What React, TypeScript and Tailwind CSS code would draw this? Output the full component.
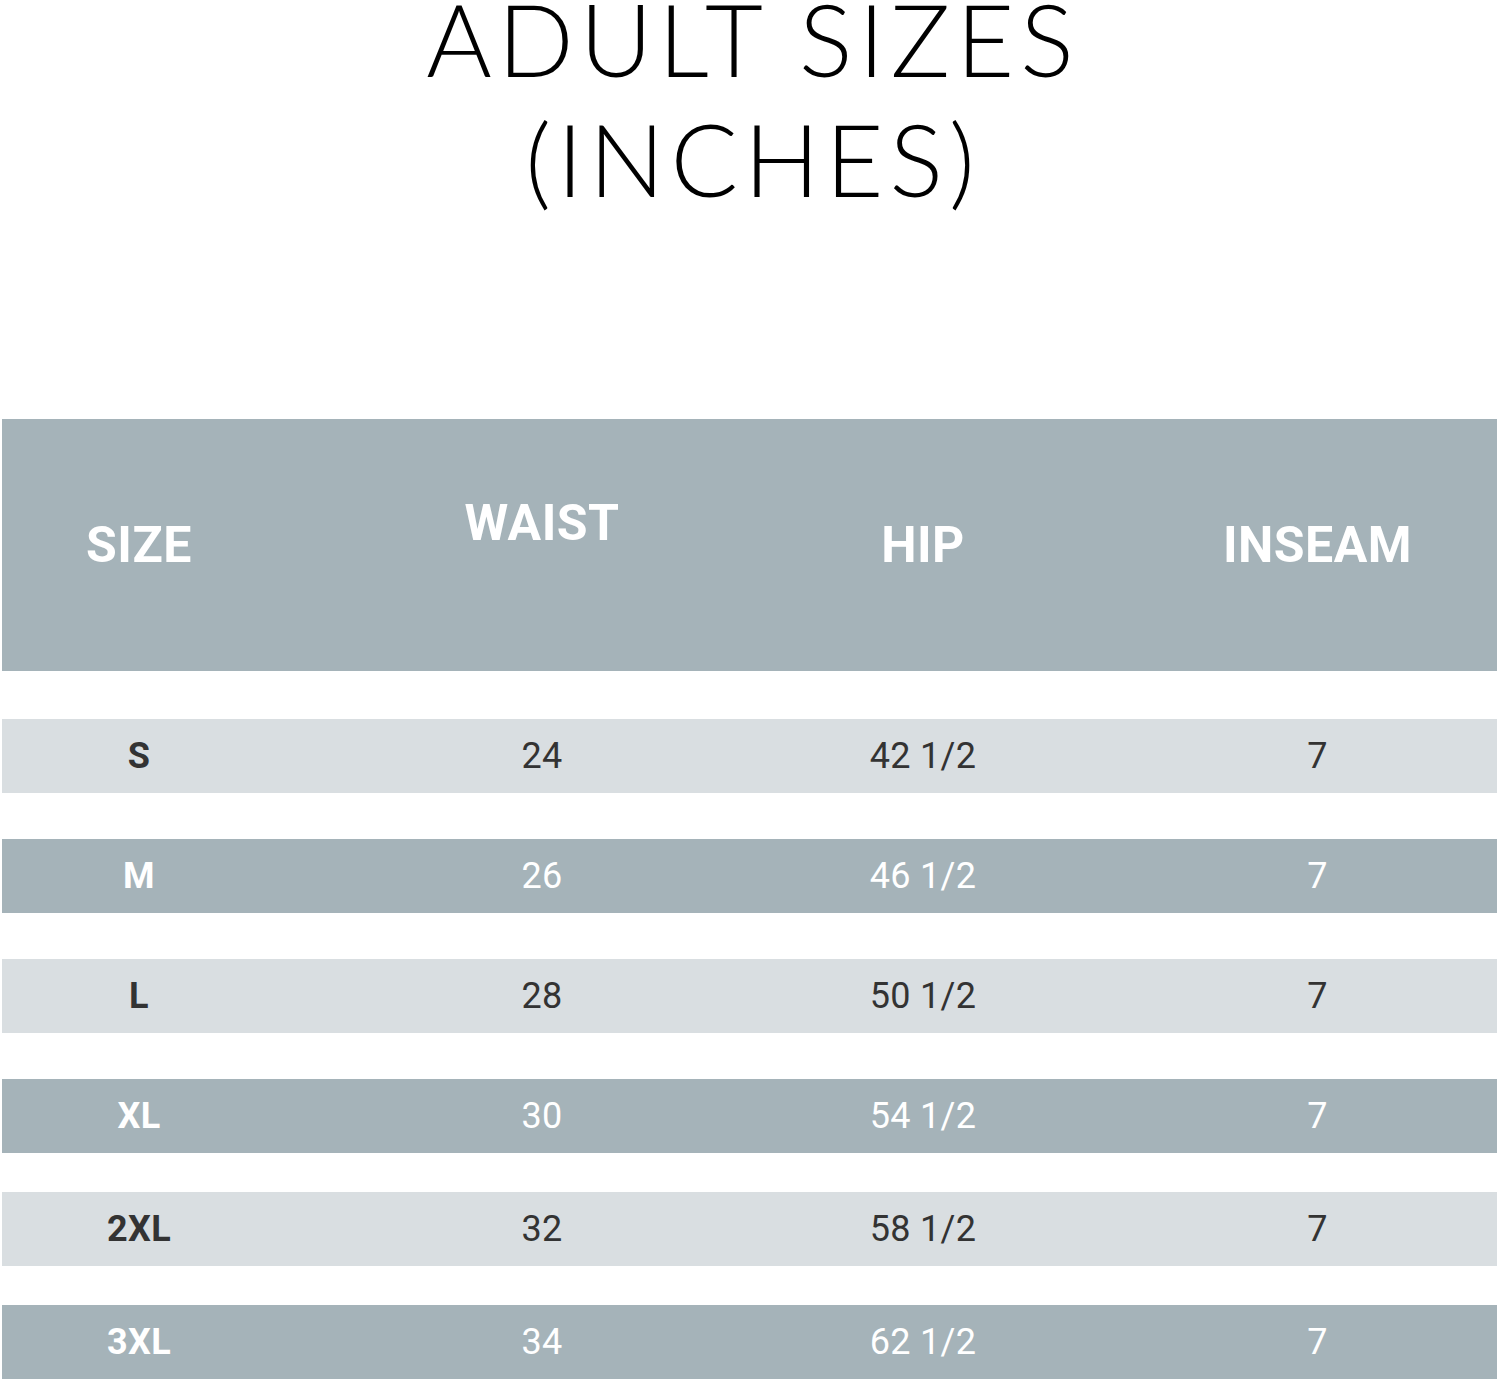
const rows = [
  { size: "S", waist: "24", hip: "42 1/2", inseam: "7", dark: false, gap: "mt-[48px]" },
  { size: "M", waist: "26", hip: "46 1/2", inseam: "7", dark: true, gap: "mt-[46px]" },
  { size: "L", waist: "28", hip: "50 1/2", inseam: "7", dark: false, gap: "mt-[46px]" },
  { size: "XL", waist: "30", hip: "54 1/2", inseam: "7", dark: true, gap: "mt-[46px]" },
  { size: "2XL", waist: "32", hip: "58 1/2", inseam: "7", dark: false, gap: "mt-[39px]" },
  { size: "3XL", waist: "34", hip: "62 1/2", inseam: "7", dark: true, gap: "mt-[39px]" },
];

export default function App() {
  return (
    <main className="w-[1500px] h-[1382px] overflow-hidden bg-white font-['Roboto',sans-serif]">
      <h1 className="-mt-[22px] pl-[6px] text-center font-['Lato',sans-serif] font-light text-[100px] leading-[120px] tracking-[6px] text-black">
        ADULT SIZES
        <br />
        (INCHES)
      </h1>

      <div className="ml-[2px] mt-[201px] w-[1495px]">
        <div className="grid h-[252px] grid-cols-[274px_532px_230px_1fr] items-center bg-[#a5b3b9] text-[50px] font-bold tracking-[0.5px] text-white">
          <div className="text-center">SIZE</div>
          <div className="pb-[44px] text-center">WAIST</div>
          <div className="text-center">HIP</div>
          <div className="pl-[100px] text-center">INSEAM</div>
        </div>

        {rows.map((r) => (
          <div
            key={r.size}
            className={`${r.gap} grid h-[74px] grid-cols-[274px_532px_230px_1fr] items-center text-[36px] tracking-[0.3px] ${
              r.dark ? "bg-[#a5b3b9] text-white" : "bg-[#d9dee1] text-[#333333]"
            }`}
          >
            <div className="text-center font-bold">{r.size}</div>
            <div className="text-center">{r.waist}</div>
            <div className="text-center">{r.hip}</div>
            <div className="pl-[100px] text-center">{r.inseam}</div>
          </div>
        ))}
      </div>
    </main>
  );
}
